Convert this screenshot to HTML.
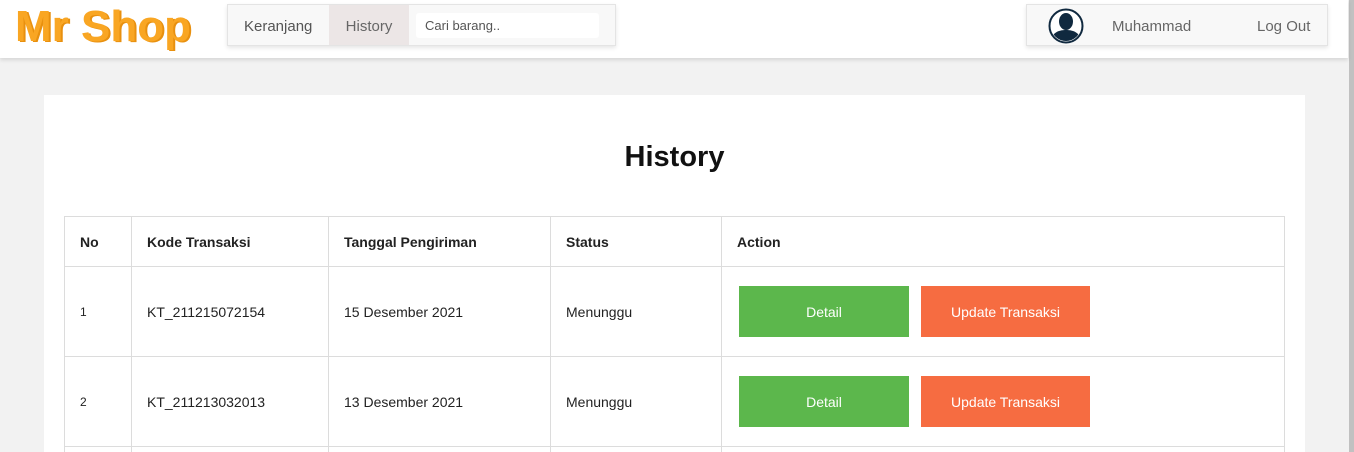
<!DOCTYPE html>
<html><head><meta charset="utf-8"><style>
*{box-sizing:border-box;margin:0;padding:0}
html,body{width:1354px;height:452px;overflow:hidden}
body{background:#f2f2f2;font-family:"Liberation Sans",sans-serif;position:relative}
.hdr{position:absolute;left:0;top:0;width:1348px;height:58px;background:#fff;box-shadow:0 2px 4px rgba(0,0,0,.12);z-index:2}
.logo{position:absolute;left:15px;top:2px;font-size:44px;font-weight:bold;color:#f9a623;text-shadow:2px 1px 0 #e8900f;line-height:50px}
.nav{position:absolute;left:227px;top:4px;width:389px;height:42px;background:#f8f8f8;border:1px solid #e4e4e4;box-shadow:0 2px 4px rgba(0,0,0,.1);font-size:15px;color:#555}
.nav span{position:absolute;top:0;line-height:44px}
.hist{left:101px;width:80px;height:40px;background:#ece6e6;text-align:center;color:#666}
.search{position:absolute;left:188px;top:8px;width:183px;height:25px;background:#fff;border-radius:3px;font-size:13px;color:#555;line-height:25px;padding-left:9px}
.user{position:absolute;left:1026px;top:4px;width:302px;height:42px;background:#f8f8f8;border:1px solid #e4e4e4;box-shadow:0 2px 4px rgba(0,0,0,.1);font-size:15px;color:#666}
.card{position:absolute;left:44px;top:95px;width:1261px;height:357px;background:#fff;overflow:hidden}
h1{position:absolute;left:0;width:100%;top:46px;text-align:center;font-size:29px;font-weight:bold;color:#111}
table{position:absolute;left:20px;top:121px;width:1221px;border-collapse:collapse;font-size:14px;color:#222}
td,th{border:1px solid #dcdcdc;text-align:left;padding-left:15px}
th{height:50px;font-weight:bold}
td{height:90px}
tr.last td{height:6px;border-bottom:none}
.btn{display:inline-block;width:170px;height:51px;line-height:53px;text-align:center;color:#fff;font-size:14px;vertical-align:middle}
.g{background:#5cb74c;margin-left:2px}.o{background:#f66c41;margin-left:12px;width:169px}
.sb{position:absolute;right:0;top:0;width:5px;height:452px;background:#c1c1c1}
</style></head><body>
<div class="hdr">
<div class="logo">Mr Shop</div>
<div class="nav"><span style="left:16px">Keranjang</span><span class="hist">History</span><div class="search">Cari barang..</div></div>
<div class="user">
<svg style="position:absolute;left:21px;top:3px" width="36" height="36" viewBox="0 0 36 36"><circle cx="18" cy="18" r="16.5" fill="#fff" stroke="#10293f" stroke-width="2"/><clipPath id="c"><circle cx="18" cy="18" r="15"/></clipPath><g clip-path="url(#c)" fill="#10293f"><ellipse cx="18" cy="13.5" rx="7" ry="8.5"/><path d="M2 36 C3 25 10 22 18 22 C26 22 33 25 34 36Z"/></g></svg>
<span style="position:absolute;left:85px;line-height:44px">Muhammad</span>
<span style="position:absolute;left:230px;line-height:44px">Log Out</span>
</div>
</div>
<div class="card">
<h1>History</h1>
<table>
<tr><th style="width:67px">No</th><th style="width:197px">Kode Transaksi</th><th style="width:222px">Tanggal Pengiriman</th><th style="width:171px">Status</th><th>Action</th></tr>
<tr><td style="font-size:12px">1</td><td>KT_211215072154</td><td>15 Desember 2021</td><td>Menunggu</td><td><span class="btn g">Detail</span><span class="btn o">Update Transaksi</span></td></tr>
<tr><td style="font-size:12px">2</td><td>KT_211213032013</td><td>13 Desember 2021</td><td>Menunggu</td><td><span class="btn g">Detail</span><span class="btn o">Update Transaksi</span></td></tr>
<tr class="last"><td></td><td></td><td></td><td></td><td></td></tr>
</table>
</div>
<div class="sb"></div>
</body></html>
